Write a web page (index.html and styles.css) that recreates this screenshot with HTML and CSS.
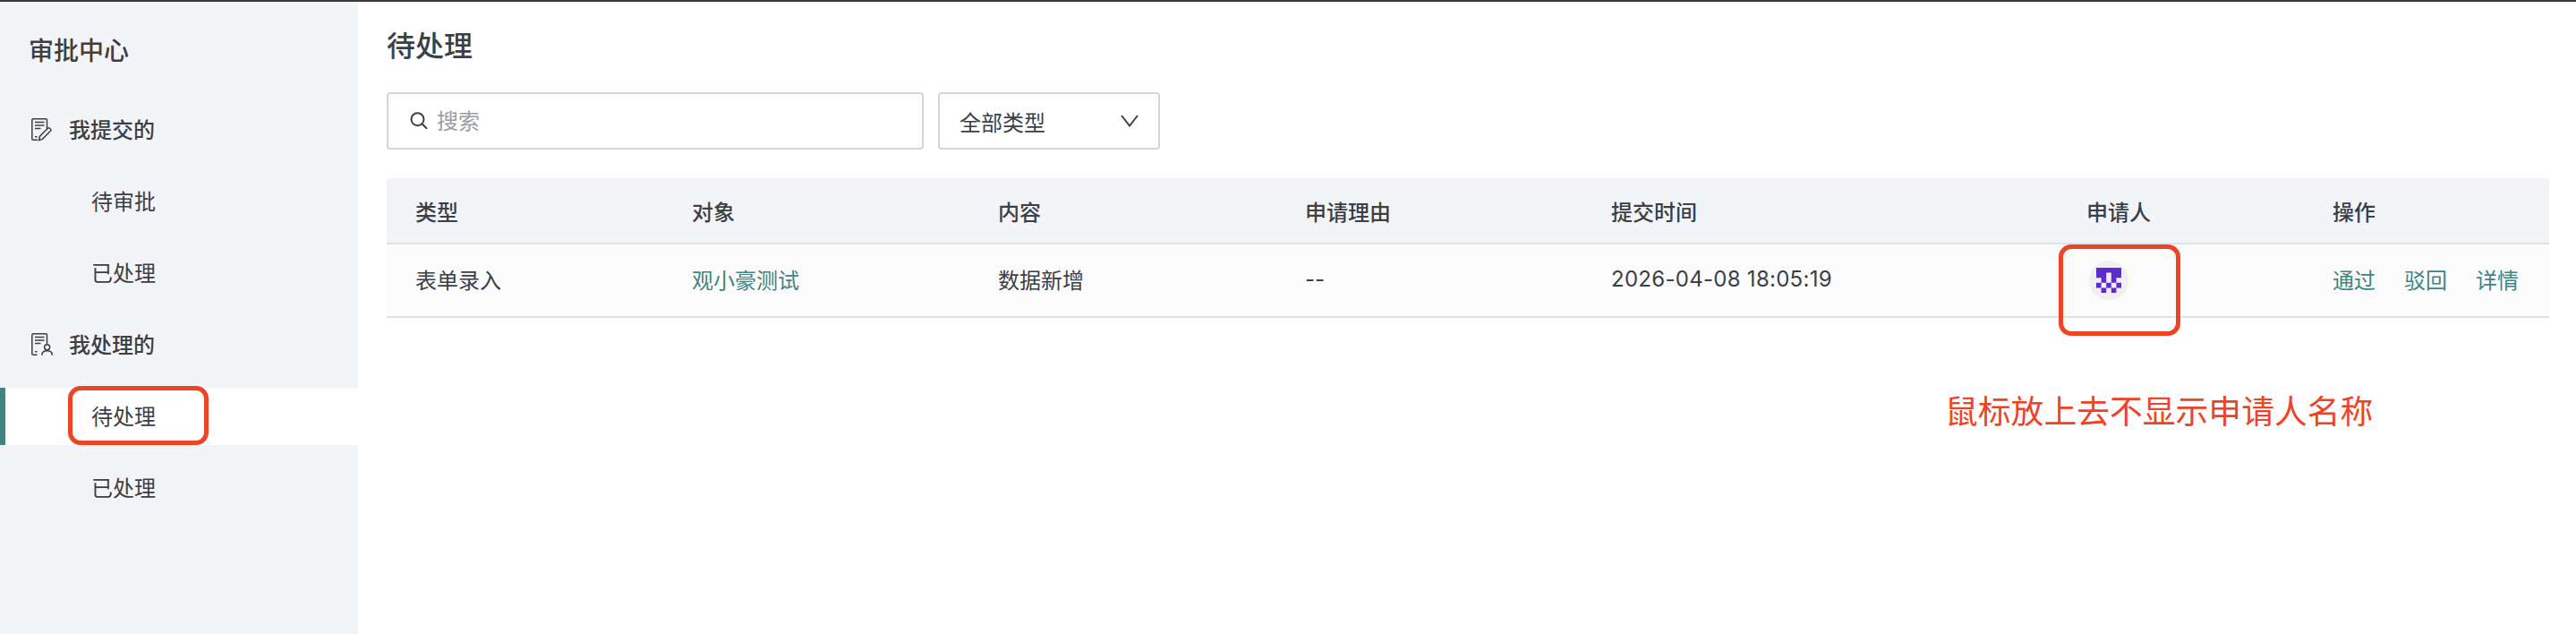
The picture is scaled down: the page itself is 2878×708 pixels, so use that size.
FILE: index.html
```html
<!DOCTYPE html>
<html lang="zh-CN">
<head>
<meta charset="utf-8">
<title>审批中心</title>
<link rel="stylesheet" href="styles.css">
</head>
<body>
<div class="page">
  <aside class="sidebar">
    <h2 class="side-title">审批中心</h2>
    <nav class="side-nav">
      <div class="side-group">
        <svg class="side-icon" viewBox="0 0 24 26" fill="none" stroke="currentColor" stroke-width="1.5">
          <path d="M7 24.2H2a1.2 1.2 0 0 1-1.2-1.2V2A1.2 1.2 0 0 1 2 .8h14.3A1.2 1.2 0 0 1 17.5 2v11"/>
          <path d="M4 4.5h10.5M4 8h10.5M4 11.5h6.5M4 20.8h2.5"/>
          <path d="M8.6 24.6l.7-4.2 9-9.2a1.6 1.6 0 0 1 2.3 0l.8.8a1.6 1.6 0 0 1 0 2.3l-9 9.1z"/>
        </svg>
        <span class="side-label">我提交的</span>
      </div>
      <div class="side-item">待审批</div>
      <div class="side-item">已处理</div>
      <div class="side-group">
        <svg class="side-icon" viewBox="0 0 24 26" fill="none" stroke="currentColor" stroke-width="1.5">
          <path d="M6.5 24.2H2a1.2 1.2 0 0 1-1.2-1.2V2A1.2 1.2 0 0 1 2 .8h14.3A1.2 1.2 0 0 1 17.5 2v10"/>
          <path d="M4 4.5h10.5M4 8h10.5M4 11.5h6.5M4 20.8h2.5"/>
          <circle cx="17.6" cy="15.8" r="3"/>
          <path d="M11.8 24.8c0-3.3 2.4-5 5.8-5s5.8 1.7 5.8 5"/>
        </svg>
        <span class="side-label">我处理的</span>
      </div>
      <div class="side-item side-item-active">待处理</div>
      <div class="side-item">已处理</div>
    </nav>
  </aside>
  <main class="main">
    <h1 class="main-title">待处理</h1>
    <div class="toolbar">
      <label class="search">
        <svg class="search-icon" viewBox="0 0 20 20" fill="none" stroke="currentColor" stroke-width="2">
          <circle cx="8.5" cy="8.2" r="7"/>
          <path d="M13.6 13.2l5.4 5.6"/>
        </svg>
        <input class="search-input" type="text" placeholder="搜索">
      </label>
      <div class="select">
        <span>全部类型</span>
        <svg class="select-arrow" viewBox="0 0 20 14" fill="none" stroke="currentColor" stroke-width="2">
          <path d="M1 1l9 11.5L19 1"/>
        </svg>
      </div>
    </div>
    <div class="table">
      <div class="row row-head">
        <div>类型</div><div>对象</div><div>内容</div><div>申请理由</div><div>提交时间</div><div>申请人</div><div>操作</div>
      </div>
      <div class="row row-body">
        <div>表单录入</div>
        <div><a class="link">观小豪测试</a></div>
        <div>数据新增</div>
        <div>--</div>
        <div class="time">2026-04-08 18:05:19</div>
        <div class="avatar-cell">
          <span class="avatar">
            <svg class="avatar-art" viewBox="0 0 5 5">
              <path d="M0 0h5v2H3V1H2v1H0zM1 2h1v1H1zM3 2h1v1H3zM0 3h1v1H0zM2 3h1v1H2zM4 3h1v1H4zM1 4h1v1H1zM3 4h1v1H3z"/>
            </svg>
          </span>
        </div>
        <div class="actions"><a class="link">通过</a><a class="link">驳回</a><a class="link">详情</a></div>
      </div>
    </div>
  </main>
</div>
<div class="mark mark-nav"></div>
<div class="mark mark-user"></div>
<div class="note">鼠标放上去不显示申请人名称</div>
</body>
</html>
```

FILE: styles.css
```css
* { box-sizing: border-box; }

html, body {
  margin: 0;
  height: 100%;
}

body {
  position: relative;
  overflow: hidden;
  background: #fff;
  color: #3b4045;
  font-family: Inter, "Noto Sans CJK SC", sans-serif;
  font-size: 24px;
}

.page {
  display: flex;
  height: 708px;
  border-top: 2px solid #3a3a3a;
}

.sidebar {
  flex: 0 0 400px;
  background: #f2f4f8;
}

.side-title {
  margin: 35px 0 36px 32px;
  font-size: 28px;
  line-height: 40px;
  font-weight: 500;
}

.side-nav {
  display: flex;
  flex-direction: column;
  gap: 16px;
}

.side-group {
  display: flex;
  align-items: center;
  gap: 18px;
  height: 64px;
  padding-left: 35px;
  font-weight: 500;
}

.side-label {
  padding-bottom: 3px;
}

.side-icon {
  width: 24px;
  height: 26px;
}

.side-item {
  display: flex;
  align-items: center;
  height: 64px;
  padding: 0 0 3px 102px;
}

.side-item-active {
  background: #fff;
  border-left: 6px solid #3f8580;
  padding-left: 96px;
}

.main {
  flex: 1;
  padding: 28px 30px 0 32px;
}

.main-title {
  margin: 0 0 29px;
  font-size: 32px;
  line-height: 44px;
  font-weight: 500;
}

.toolbar {
  display: flex;
  gap: 16px;
  margin-bottom: 32px;
}

.search,
.select {
  display: flex;
  align-items: center;
  height: 64px;
  border: 2px solid #d2d6dc;
  border-radius: 4px;
  background: #fff;
}

.search {
  width: 600px;
  padding-left: 24px;
  gap: 10px;
}

.search-icon {
  width: 20px;
  height: 20px;
}

.search-input {
  flex: 1;
  min-width: 0;
  border: 0;
  outline: 0;
  padding: 0;
  background: transparent;
  font: inherit;
  color: inherit;
}

.search-input::placeholder {
  color: #9a9ea3;
  opacity: 1;
}

.select {
  width: 248px;
  padding: 0 22px 0 22px;
  justify-content: space-between;
}

.select-arrow {
  width: 20px;
  height: 14px;
}

.table {
  display: flex;
  flex-direction: column;
}

.row {
  display: grid;
  grid-template-columns: 341px 342px 343px 342px 531px 275px 242px;
  align-items: center;
  border-bottom: 2px solid #e1e2e8;
}

.row > :first-child {
  padding-left: 32px;
}

.row-head {
  height: 74px;
  background: #f2f4f8;
  border-radius: 4px 4px 0 0;
  font-weight: 500;
}

.row-body {
  height: 82px;
  background: #fbfbfc;
}

.row-body > div {
  padding-bottom: 3px;
}

.row-body > .avatar-cell {
  padding-bottom: 0;
}

.time {
  letter-spacing: 0.28px;
}

.link {
  color: #3f8580;
  text-decoration: none;
}

.avatar {
  display: flex;
  align-items: center;
  justify-content: center;
  width: 44px;
  height: 44px;
  margin-left: 3px;
  border-radius: 50%;
  background: #f0f0f1;
}

.avatar-art {
  width: 28px;
  height: 28px;
  fill: #5b2ad0;
}

.actions {
  display: flex;
  gap: 32px;
}

.mark {
  position: absolute;
  border: 5px solid #ee4426;
  border-radius: 14px;
}

.mark-nav {
  left: 76px;
  top: 431px;
  width: 157px;
  height: 66px;
}

.mark-user {
  left: 2300px;
  top: 273px;
  width: 136px;
  height: 102px;
}

.note {
  position: absolute;
  left: 2173px;
  top: 435px;
  font-size: 36.8px;
  line-height: 50px;
  color: #ee4426;
  white-space: nowrap;
}
```
